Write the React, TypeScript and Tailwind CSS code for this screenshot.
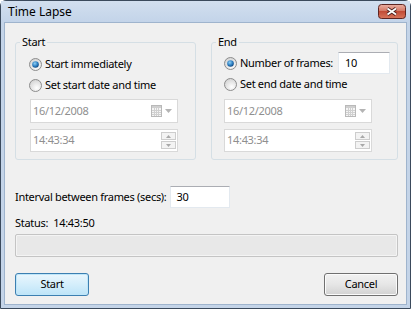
import React from "react";

function Radio({ checked }: { checked?: boolean }) {
  return (
    <svg width="13" height="13" viewBox="0 0 13 13" className="shrink-0">
      <defs>
        <radialGradient id="rbg" cx="0.6" cy="0.7" r="0.7">
          <stop offset="0" stopColor="#ffffff" />
          <stop offset="1" stopColor="#d4d4d4" />
        </radialGradient>
        <radialGradient id="rdot" cx="0.4" cy="0.35" r="0.7">
          <stop offset="0" stopColor="#8fd0f5" />
          <stop offset="0.6" stopColor="#2a7cc0" />
          <stop offset="1" stopColor="#0d3f73" />
        </radialGradient>
      </defs>
      <circle cx="6.5" cy="6.5" r="6" fill="url(#rbg)" stroke="#8d8d8d" />
      {checked && <circle cx="6.5" cy="6.5" r="3.3" fill="url(#rdot)" />}
    </svg>
  );
}

function CalendarIcon() {
  return (
    <svg width="11" height="12" viewBox="0 0 11 12" className="shrink-0">
      <rect x="0.5" y="0.5" width="10" height="11" fill="#f5f5f5" stroke="#b9b9b9" />
      <rect x="1" y="1" width="9" height="2" fill="#cfcfcf" />
      <path
        d="M1 5.5H10M1 7.5H10M1 9.5H10M3.5 3V11M5.5 3V11M7.5 3V11"
        stroke="#d0d0d0"
        strokeWidth="1"
      />
    </svg>
  );
}

function DateField() {
  return (
    <div className="flex h-[24px] w-[148px] items-center border border-[#d9d9d9] bg-white pl-[2px] pr-[5px] text-[#8f8f8f]">
      <span className="flex-1">16/12/2008</span>
      <CalendarIcon />
      <svg width="7" height="4" viewBox="0 0 7 4" className="ml-[3px]">
        <path d="M0 0H7L3.5 4Z" fill="#b4b4b4" />
      </svg>
    </div>
  );
}

function SpinBox() {
  return (
    <div className="flex flex-col gap-[1px]">
      <div className="flex h-[8px] w-[15px] items-center justify-center border border-[#cdcdcd] bg-[#f3f3f3]">
        <svg width="5" height="3" viewBox="0 0 5 3">
          <path d="M2.5 0L5 3H0Z" fill="#a8a8a8" />
        </svg>
      </div>
      <div className="flex h-[8px] w-[15px] items-center justify-center border border-[#cdcdcd] bg-[#f3f3f3]">
        <svg width="5" height="3" viewBox="0 0 5 3">
          <path d="M0 0H5L2.5 3Z" fill="#a8a8a8" />
        </svg>
      </div>
    </div>
  );
}

function TimeField() {
  return (
    <div className="flex h-[23px] w-[148px] items-center border border-[#d9d9d9] bg-white pl-[2px] pr-[1px] text-[#8f8f8f]">
      <span className="flex-1">14:43:34</span>
      <SpinBox />
    </div>
  );
}

function TextBox({ value, w }: { value: string; w: string }) {
  return (
    <div
      className={
        "flex h-[22px] items-center border border-[#e3e9ef] border-t-[#abadb3] bg-white pl-[6px] " + w
      }
    >
      {value}
    </div>
  );
}

function CloseButton() {
  return (
    <svg width="28" height="15" viewBox="0 0 28 15">
      <defs>
        <linearGradient id="cg" x1="0" y1="0" x2="0" y2="1">
          <stop offset="0" stopColor="#eab0a3" />
          <stop offset="0.45" stopColor="#d57a67" />
          <stop offset="0.5" stopColor="#c24c37" />
          <stop offset="1" stopColor="#d8765c" />
        </linearGradient>
      </defs>
      <rect x="0.5" y="0.5" width="27" height="14" rx="3" fill="url(#cg)" stroke="#5e2521" />
      <path d="M9.5 4.5L18 10.5M18 4.5L9.5 10.5" stroke="#4a1f1c" strokeWidth="3.4" />
      <path d="M9.5 4.5L18 10.5M18 4.5L9.5 10.5" stroke="#ffffff" strokeWidth="1.8" />
    </svg>
  );
}

export default function App() {
  return (
    <div className="flex h-[309px] w-[411px] flex-col whitespace-nowrap rounded-t-[6px] border border-[#3b4a5c] bg-[#c4d4e8] font-['Noto_Sans',sans-serif] text-[11px] tracking-[-0.3px] text-black">
      {/* title bar */}
      <div className="flex h-[21px] shrink-0 items-center bg-gradient-to-b from-[#d2dfef] to-[#c3d4e9] pl-[7px] pr-[4px]">
        <div className="flex-1 text-[12px] tracking-normal">Time Lapse</div>
        <CloseButton />
      </div>

      {/* client area */}
      <div className="mx-[3px] mb-[3px] flex-1 border border-[#9fb4cd] bg-[#f0f0f0] pl-[10px]">
        <div className="mt-[19px] flex gap-[15px]">
          {/* Start group */}
          <div className="flex h-[118px] w-[181px] flex-col rounded-[3px] border border-[#d5dfe5] pl-[13px]">
            <div className="-ml-[9px] -mt-[8px] w-fit bg-[#f0f0f0] px-[2px] leading-[14px]">Start</div>
            <div className="mt-[7px] flex h-[16px] items-center gap-[3px]">
              <Radio checked />
              <span>Start immediately</span>
            </div>
            <div className="mt-[5px] flex h-[16px] items-center gap-[3px]">
              <Radio />
              <span>Set start date and time</span>
            </div>
            <div className="ml-[1px] mt-[6px]">
              <DateField />
            </div>
            <div className="ml-[1px] mt-[6px]">
              <TimeField />
            </div>
          </div>

          {/* End group */}
          <div className="flex h-[118px] w-[187px] flex-col rounded-[3px] border border-[#d5dfe5] pl-[12px] pr-[7px]">
            <div className="-ml-[8px] -mt-[8px] w-fit bg-[#f0f0f0] px-[2px] leading-[14px]">End</div>
            <div className="mt-[3px] flex h-[22px] items-center gap-[3px]">
              <Radio checked />
              <span>Number of frames:</span>
              <div className="ml-auto">
                <TextBox value="10" w="w-[52px]" />
              </div>
            </div>
            <div className="mt-[2px] flex h-[16px] items-center gap-[3px]">
              <Radio />
              <span>Set end date and time</span>
            </div>
            <div className="mt-[7px]">
              <DateField />
            </div>
            <div className="mt-[6px]">
              <TimeField />
            </div>
          </div>
        </div>

        {/* interval */}
        <div className="mt-[26px] flex h-[22px] items-center gap-[3px]">
          <span>Interval between frames (secs):</span>
          <TextBox value="30" w="w-[60px]" />
        </div>

        {/* status */}
        <div className="mt-[7px] flex h-[16px] items-center">Status:&nbsp; 14:43:50</div>

        {/* progress */}
        <div className="mt-[3px] h-[23px] w-[383px] rounded-[2px] border border-[#c4c4c4] bg-[#e8e8e8] shadow-[inset_0_0_0_1px_#f4f4f4]" />

        {/* buttons */}
        <div className="mt-[16px] flex w-[383px] justify-between">
          <button className="h-[23px] w-[74px] rounded-[3px] border border-[#3c7fb1] bg-gradient-to-b from-[#eaf6fd] via-[#d4eefb] to-[#bde4f8] shadow-[inset_0_0_0_1px_#bfe6f9]">
            Start
          </button>
          <button className="h-[23px] w-[74px] rounded-[3px] border border-[#707070] bg-gradient-to-b from-[#f2f2f2] via-[#e6e6e6] to-[#d2d2d2] shadow-[inset_0_0_0_1px_#fbfbfb]">
            Cancel
          </button>
        </div>
      </div>
    </div>
  );
}
